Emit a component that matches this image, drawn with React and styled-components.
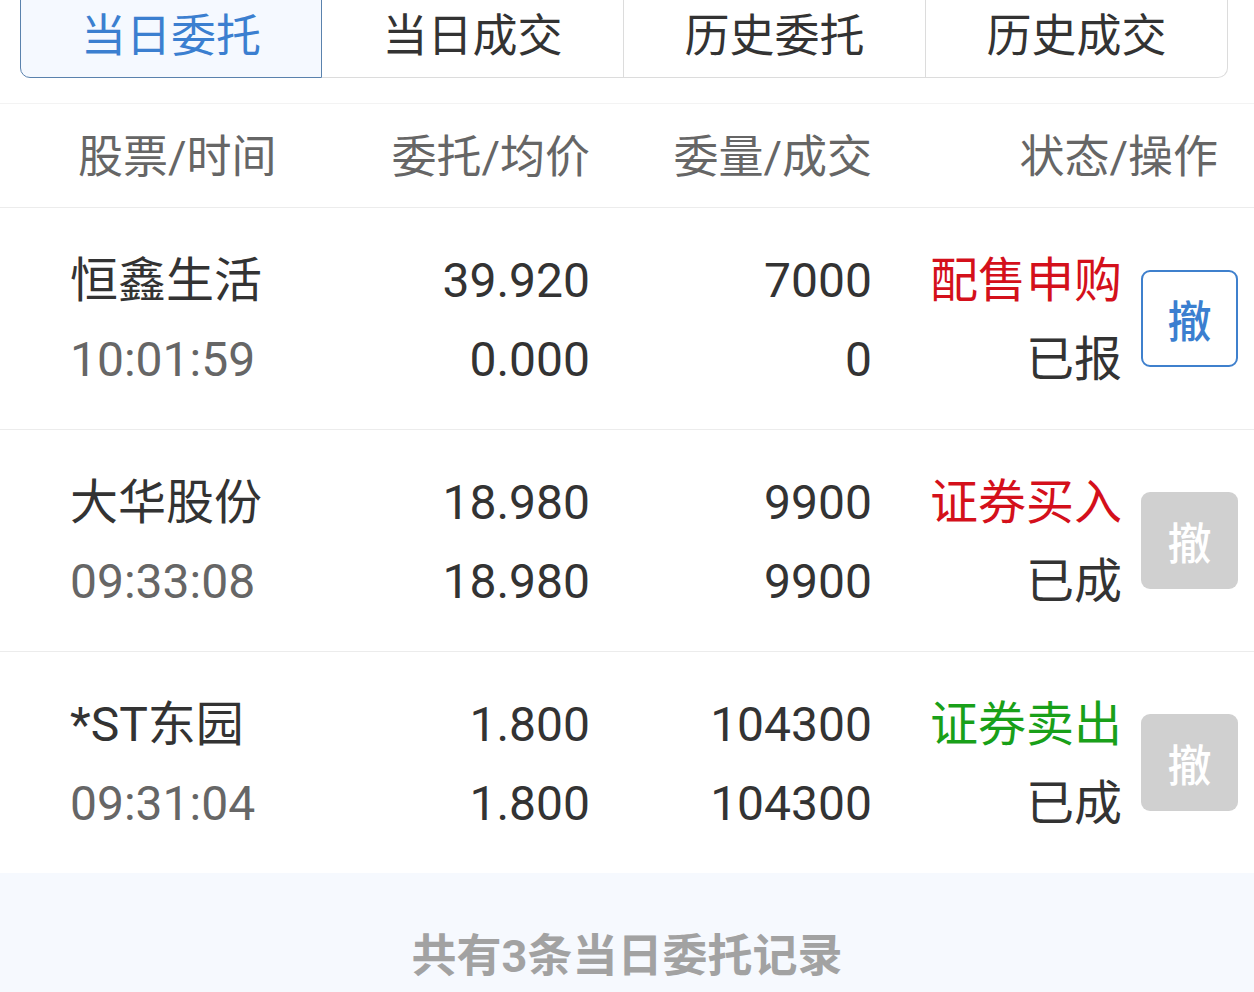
import React from 'react'
import styled, { createGlobalStyle } from 'styled-components'

const GlobalStyle = createGlobalStyle`
    html, body {
        margin: 0;
        padding: 0;
        background: #fff;
        overflow: hidden;
    }
    body {
        font-family: Roboto, "Noto Sans CJK SC", sans-serif;
    }
`

const Page = styled.div`
    width: 1254px;
    height: 992px;
    overflow: hidden;
    display: flex;
    flex-direction: column;
`

const Tabs = styled.div`
    display: grid;
    grid-template-columns: repeat(4, 1fr);
    margin: -14px 26px 0 20px;
    height: 92px;
`

const Tab = styled.div`
    display: flex;
    align-items: center;
    justify-content: center;
    font-size: 45px;
    color: ${p => (p.active ? '#3b7fd0' : '#333')};
    background: ${p => (p.active ? '#f5f9ff' : '#fff')};
    border: 1px solid ${p => (p.active ? '#5a82ad' : '#dcdcdc')};
    border-left: none;
    &:first-child {
        border-left: 1px solid ${p => (p.active ? '#5a82ad' : '#dcdcdc')};
        border-radius: 0 0 0 10px;
    }
    &:last-child {
        border-radius: 0 0 10px 0;
    }
`

const Divider = styled.div`
    height: 1px;
    background: #f3f3f3;
    margin-top: 25px;
`

const Header = styled.div`
    display: grid;
    grid-template-columns: 232px 280px 282px 346px;
    padding-left: 78px;
    padding-bottom: 5px;
    height: 104px;
    box-sizing: border-box;
    align-items: center;
    border-bottom: 1px solid #ececec;
    font-size: 45px;
    color: #666;
`

const HeadCell = styled.div`
    text-align: ${p => p.align || 'right'};
`

const Row = styled.div`
    display: grid;
    grid-template-columns: 240px 280px 282px 250px 97px;
    padding-left: 70px;
    height: 221px;
    align-items: center;
    border-bottom: ${p => (p.last ? 'none' : '1px solid #ececec')};
`

const Cell = styled.div`
    display: flex;
    flex-direction: column;
    align-items: ${p => (p.align === 'left' ? 'flex-start' : 'flex-end')};
    padding-top: 3px;
    font-size: 48px;
    line-height: 79px;
    color: #333;
    white-space: nowrap;
`

const Sub = styled.span`
    color: ${p => p.color || '#333'};
`

const CancelButton = styled.div`
    grid-column: 5;
    margin-left: 19px;
    width: 97px;
    height: 97px;
    box-sizing: border-box;
    border-radius: 9px;
    display: flex;
    align-items: center;
    justify-content: center;
    font-size: 44px;
    font-weight: 500;
    color: ${p => (p.disabled ? '#fff' : '#3b7fd0')};
    background: ${p => (p.disabled ? '#d0d0d0' : '#fff')};
    border: ${p => (p.disabled ? 'none' : '2.5px solid #3f80cd')};
`

const Footer = styled.div`
    flex: 1;
    background: #f6f9fe;
    text-align: center;
    padding-top: 58px;
    font-size: 45px;
    line-height: 52px;
    font-weight: 700;
    color: #a2a2a2;
`

const tabs = ['当日委托', '当日成交', '历史委托', '历史成交']

const orders = [
    {
        name: '恒鑫生活',
        time: '10:01:59',
        price: '39.920',
        avg: '0.000',
        qty: '7000',
        filled: '0',
        type: '配售申购',
        typeColor: '#d4101b',
        status: '已报',
        canCancel: true
    },
    {
        name: '大华股份',
        time: '09:33:08',
        price: '18.980',
        avg: '18.980',
        qty: '9900',
        filled: '9900',
        type: '证券买入',
        typeColor: '#d4101b',
        status: '已成',
        canCancel: false
    },
    {
        name: '*ST东园',
        time: '09:31:04',
        price: '1.800',
        avg: '1.800',
        qty: '104300',
        filled: '104300',
        type: '证券卖出',
        typeColor: '#19a019',
        status: '已成',
        canCancel: false
    }
]

export default function App() {
    return (
        <Page>
            <GlobalStyle />
            <Tabs>
                {tabs.map((t, i) => (
                    <Tab key={t} active={i === 0}>
                        {t}
                    </Tab>
                ))}
            </Tabs>
            <Divider />
            <Header>
                <HeadCell align="left">股票/时间</HeadCell>
                <HeadCell>委托/均价</HeadCell>
                <HeadCell>委量/成交</HeadCell>
                <HeadCell>状态/操作</HeadCell>
            </Header>
            {orders.map((o, i) => (
                <Row key={o.time} last={i === orders.length - 1}>
                    <Cell align="left">
                        <Sub>{o.name}</Sub>
                        <Sub color="#666">{o.time}</Sub>
                    </Cell>
                    <Cell>
                        <Sub>{o.price}</Sub>
                        <Sub>{o.avg}</Sub>
                    </Cell>
                    <Cell>
                        <Sub>{o.qty}</Sub>
                        <Sub>{o.filled}</Sub>
                    </Cell>
                    <Cell>
                        <Sub color={o.typeColor}>{o.type}</Sub>
                        <Sub>{o.status}</Sub>
                    </Cell>
                    <CancelButton disabled={!o.canCancel}>撤</CancelButton>
                </Row>
            ))}
            <Footer>共有3条当日委托记录</Footer>
        </Page>
    )
}
